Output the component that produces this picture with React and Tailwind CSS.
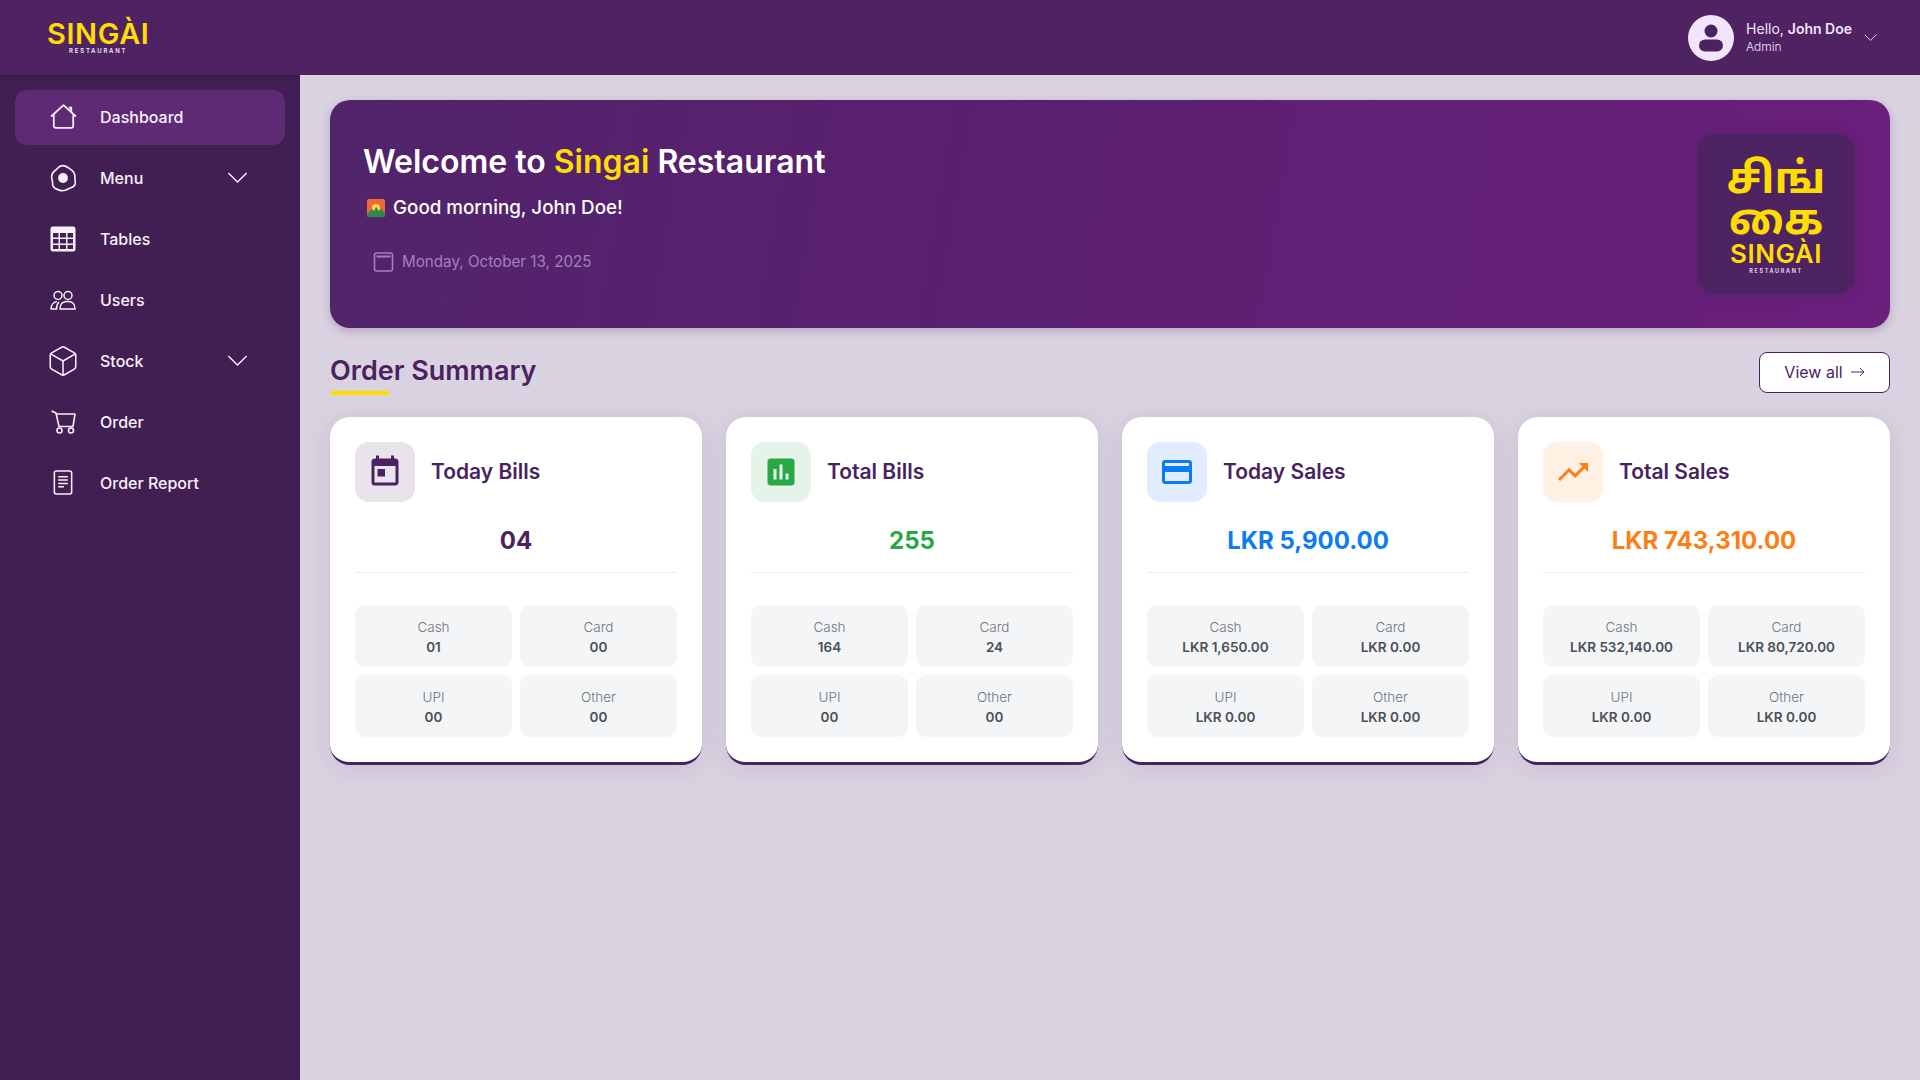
import React from "react";
import { Box } from "lucide-react";
import { MdToday, MdAssessment, MdCreditCard, MdTrendingUp } from "react-icons/md";

const font = { fontFamily: "Inter, 'Noto Sans', sans-serif" };

function Chevron({ className }) {
  return (
    <svg viewBox="0 0 22 12" fill="none" stroke="currentColor" strokeWidth="1.5" className={className}>
      <path d="M1 1l10 10L21 1" />
    </svg>
  );
}

function HomeIcon() {
  return (
    <svg viewBox="0 0 25 23" fill="none" stroke="currentColor" strokeWidth="1.6" strokeLinejoin="round" className="w-[27px] h-[25px] shrink-0">
      <path d="M1 11.500 12.500 1 24 11.500" />
      <path d="M3.500 10v10a2 2 0 0 0 2 2h14a2 2 0 0 0 2-2V10" />
      <path d="M17 2.500h3.500v6z" fill="currentColor" stroke="none" />
    </svg>
  );
}

function EggIcon() {
  return (
    <svg viewBox="0 0 26 26" fill="none" stroke="currentColor" strokeWidth="1.5" className="w-[28px] h-[28px] shrink-0">
      <path d="M12.500 1.500c3 0 5 1.500 7 3 3 2 5 4.500 4.500 8-.3 2 .8 3.500.3 6-.8 3-4 3.500-6 4.500-2.500 1.500-5 2.500-8 1.500-2-.8-5-1-6.500-4-1-2.500 0-4-1-6.500-1-3 .5-6 3-8 2-1.500 3.200-4.500 6.700-4.500z" />
      <circle cx="13" cy="13" r="4.600" fill="currentColor" stroke="none" />
    </svg>
  );
}

function TableIcon() {
  return (
    <svg viewBox="0 0 26 26" className="w-[26px] h-[26px] shrink-0">
      <path fill="currentColor" fillRule="evenodd" d="M3 0.500h20a2.500 2.500 0 0 1 2.500 2.500v20a2.500 2.500 0 0 1-2.500 2.500H3A2.500 2.500 0 0 1 .5 23V3A2.500 2.500 0 0 1 3 .5zM3 7v4.500h5.500V7zm7 0v4.500h6V7zm7.500 0v4.500H23V7zM3 13v4.500h5.500V13zm7 0v4.500h6V13zm7.500 0v4.500H23V13zM3 19v4h5.500v-4zm7 0v4h6v-4zm7.500 0v4H23v-4z" />
    </svg>
  );
}

function UsersIcon() {
  return (
    <svg viewBox="0 0 26 20" fill="none" stroke="currentColor" strokeWidth="1.5" className="w-[26px] h-[20px] shrink-0">
      <circle cx="8" cy="5.500" r="4" />
      <circle cx="18" cy="5.500" r="4" />
      <path d="M10 19c0-5 3-7.500 6.500-7.500h2c3.500 0 6.500 2.500 6.500 7.500zM7 11.500C3.500 12 1 15 1 19h5.500c0-2.500.5-5 2.500-7" />
    </svg>
  );
}

function CartIcon() {
  return (
    <svg viewBox="0 0 25 24" fill="none" stroke="currentColor" strokeWidth="1.6" strokeLinejoin="round" className="w-[25px] h-[24px] shrink-0">
      <path d="M.5 1 5 3l3 13.500h14L24 4H5.500" />
      <circle cx="8.500" cy="20.500" r="2.500" />
      <circle cx="20" cy="20.500" r="2.500" />
    </svg>
  );
}

function ReportIcon() {
  return (
    <svg viewBox="0 0 20 26" fill="none" stroke="currentColor" strokeWidth="1.6" className="w-[20px] h-[25px] shrink-0">
      <rect x="1" y="1" width="18" height="24" rx="2" />
      <path d="M5 7h10M5 10.500h10M5 14h10M5 17.500h6" />
    </svg>
  );
}

const navItems = [
  { label: "Dashboard", icon: <HomeIcon />, active: true },
  { label: "Menu", icon: <EggIcon />, caret: true },
  { label: "Tables", icon: <TableIcon /> },
  { label: "Users", icon: <UsersIcon /> },
  { label: "Stock", icon: <Box size={34} strokeWidth={1.1} className="shrink-0" />, caret: true },
  { label: "Order", icon: <CartIcon /> },
  { label: "Order Report", icon: <ReportIcon /> },
];

const cards = [
  {
    title: "Today Bills",
    value: "04",
    icon: <MdToday size={36} />,
    iconClass: "bg-[#e9e4ec] text-[#4a2260]",
    valueClass: "text-[#4a2260]",
    rows: ["01", "00", "00", "00"],
  },
  {
    title: "Total Bills",
    value: "255",
    icon: <MdAssessment size={36} />,
    iconClass: "bg-[#e5f3e9] text-[#28a745]",
    valueClass: "text-[#28a745]",
    rows: ["164", "24", "00", "00"],
  },
  {
    title: "Today Sales",
    value: "LKR 5,900.00",
    icon: <MdCreditCard size={36} />,
    iconClass: "bg-[#dfedfe] text-[#0d7bf2]",
    valueClass: "text-[#0d7bf2]",
    rows: ["LKR 1,650.00", "LKR 0.00", "LKR 0.00", "LKR 0.00"],
  },
  {
    title: "Total Sales",
    value: "LKR 743,310.00",
    icon: <MdTrendingUp size={36} />,
    iconClass: "bg-[#fef0e3] text-[#fd7e14]",
    valueClass: "text-[#fd7e14]",
    rows: ["LKR 532,140.00", "LKR 80,720.00", "LKR 0.00", "LKR 0.00"],
  },
];

const tileLabels = ["Cash", "Card", "UPI", "Other"];

function SummaryCard({ card }) {
  return (
    <div className="bg-white rounded-[20px] border-b-[3px] border-[#4a2260] px-[25px] pt-[25px] pb-[25px] shadow-[0_4px_24px_rgba(74,34,96,0.1)]">
      <div className="flex items-center gap-4">
        <div className={`w-[60px] h-[60px] rounded-[14px] flex items-center justify-center ${card.iconClass}`}>
          {card.icon}
        </div>
        <div className="text-[21px] font-semibold text-[#4a2260]">{card.title}</div>
      </div>
      <div className={`mt-[19px] pb-[11px] leading-[40px] text-center text-[24px] font-bold border-b border-[#eceef0] ${card.valueClass}`}>
        {card.value}
      </div>
      <div className="mt-[32px] grid grid-cols-2 gap-2">
        {card.rows.map((v, i) => (
          <div key={tileLabels[i]} className="h-[62px] pt-[2px] rounded-[10px] bg-[#f4f5f7] flex flex-col items-center justify-center">
            <div className="text-[13.5px] leading-[19px] font-light text-[#6c757d]">{tileLabels[i]}</div>
            <div className="text-[13.5px] leading-[20px] font-semibold text-[#495057]">{v}</div>
          </div>
        ))}
      </div>
    </div>
  );
}

function LogoWord({ className, subClass }) {
  return (
    <div className="flex flex-col items-center leading-none">
      <div className={`font-semibold text-[#ffdd00] ${className}`}>SINGÀI</div>
      <div className={`font-semibold text-[#f3e3fb] ${subClass}`}>RESTAURANT</div>
    </div>
  );
}

export default function App() {
  return (
    <div className="h-screen flex flex-col bg-[#d9d2e0] overflow-hidden" style={font}>
      <header className="h-[75px] shrink-0 bg-[#4f2362] flex items-center justify-between pl-[47px] pr-[43px]">
        <div className="pb-[3px]">
          <LogoWord className="text-[29px] tracking-[0.02em]" subClass="text-[6px] tracking-[0.3em]" />
        </div>
        <div className="flex items-center">
          <div className="w-[46px] h-[46px] rounded-full bg-[#f3e3fb] flex items-center justify-center text-[#4a2260]">
            <svg viewBox="0 0 26 28" fill="currentColor" className="w-[26px] h-[28px]">
              <circle cx="13" cy="7" r="6.500" />
              <rect x="1" y="15.500" width="24" height="12" rx="6" />
            </svg>
          </div>
          <div className="ml-3 text-[#f3e3fb] pb-[2px]">
            <div className="text-[14px] leading-[20px]">
              Hello, <span className="font-semibold">John Doe</span>
            </div>
            <div className="text-[12px] leading-[16px] font-light">Admin</div>
          </div>
          <Chevron className="ml-3 w-[13px] h-[7px] text-[#f3e3fb]" />
        </div>
      </header>

      <div className="flex flex-1 min-h-0">
        <aside className="w-[300px] shrink-0 bg-[#421f52] px-[15px] py-[15px] flex flex-col gap-[6px] shadow-[inset_0_6px_10px_-6px_rgba(0,0,0,0.15)]">
          {navItems.map((item) => (
            <div
              key={item.label}
              className={`h-[55px] rounded-[12px] flex items-center pl-[35px] pr-[37px] pb-[2px] text-[#f9f0fd] ${
                item.active ? "bg-[#5f2a74]" : ""
              }`}
            >
              <div className="w-[26px] flex justify-center">{item.icon}</div>
              <div className="ml-[24px] flex-1 text-[16px] font-medium">{item.label}</div>
              {item.caret && <Chevron className="w-[21px] h-[11px]" />}
            </div>
          ))}
        </aside>

        <main className="flex-1 min-w-0 px-[30px] pt-[25px]">
          <section className="h-[228px] rounded-[20px] bg-[linear-gradient(100deg,#51246a_0%,#5a2070_40%,#6a1f7c_100%)] flex items-center justify-between pl-[33px] pr-[35px] shadow-[0_3px_8px_rgba(74,34,96,0.25)]">
            <div className="self-start pt-[40px]">
              <h1 className="text-[32px] leading-[44px] font-semibold text-white">
                Welcome to <span className="text-[#ffdd00]">Singai</span> Restaurant
              </h1>
              <div className="mt-[10px] flex items-center text-[18.8px] leading-[27px] font-medium text-white">
                <svg viewBox="0 0 18 18" className="w-[18px] h-[18px] ml-[4px] mr-[8px]">
                  <rect width="18" height="18" rx="2" fill="#f0683a" />
                  <circle cx="9" cy="9" r="4" fill="#ffd83d" />
                  <path d="M0 15l5-5 2 2 2-4 3 4 2-2 4 4v2a2 2 0 0 1-2 2H2a2 2 0 0 1-2-2z" fill="#2f8a4a" />
                </svg>
                Good morning, John Doe!
              </div>
              <div className="mt-[30px] flex items-center pl-[10px] text-[15.2px] leading-[22px] text-[#a680b8]">
                <svg viewBox="0 0 20 20" fill="none" stroke="currentColor" strokeWidth="1.6" className="w-[21px] h-[20px] mr-[8px]">
                  <rect x="1" y="1" width="18" height="18" rx="2" />
                  <path d="M3 4.500h14" strokeWidth="2" />
                </svg>
                Monday, October 13, 2025
              </div>
            </div>
            <div className="w-[158px] h-[160px] rounded-[18px] bg-[#4d2361] flex flex-col items-center pt-[28px] shadow-[0_0_14px_rgba(74,34,96,0.4)]">
              <div className="text-[43px] leading-[41px] font-bold text-[#ffdd00] text-center" style={{ fontFamily: "'Noto Sans Tamil', 'Noto Sans', sans-serif" }}>
                சிங்
                <br />
                கை
              </div>
              <div className="-mt-[3px]">
                <LogoWord className="text-[26px] tracking-[0.02em]" subClass="text-[5.500px] tracking-[0.3em] mt-[2px]" />
              </div>
            </div>
          </section>

          <div className="mt-6 flex items-center justify-between h-[41px]">
            <h2 className="relative -top-px text-[27px] font-semibold text-[#4a2260]">
              Order Summary
              <span className="absolute left-0 -bottom-[3px] w-[60px] h-[4px] rounded-full bg-[#ffdd00]" />
            </h2>
            <button className="w-[131px] h-[41px] pb-[2px] rounded-lg border border-[#4a2260] bg-white text-[#4a2260] text-[16px] flex items-center justify-center gap-2">
              View all
              <svg viewBox="0 0 14 10" fill="none" stroke="currentColor" strokeWidth="1" className="w-[14px] h-[10px]">
                <path d="M0 5h13M9 1l4 4-4 4" />
              </svg>
            </button>
          </div>

          <div className="mt-6 grid grid-cols-4 gap-6">
            {cards.map((c) => (
              <SummaryCard key={c.title} card={c} />
            ))}
          </div>
        </main>
      </div>
    </div>
  );
}
